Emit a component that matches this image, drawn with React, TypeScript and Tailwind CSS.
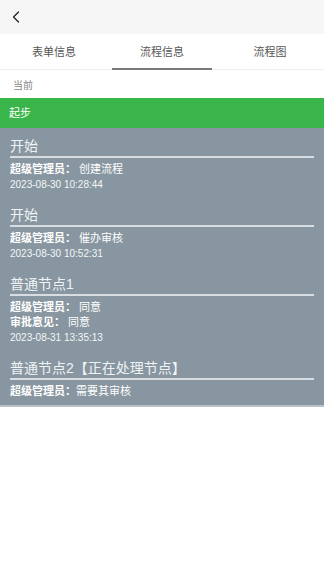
import { ChevronLeft } from "lucide-react";

const FONT = { fontFamily: '"Liberation Sans", "Noto Sans CJK SC", sans-serif' };

type Step = {
  title: string;
  rows: [string, string][];
  time?: string;
};

const steps: Step[] = [
  { title: "开始", rows: [["超级管理员：", "创建流程"]], time: "2023-08-30 10:28:44" },
  { title: "开始", rows: [["超级管理员：", "催办审核"]], time: "2023-08-30 10:52:31" },
  {
    title: "普通节点1",
    rows: [
      ["超级管理员：", "同意"],
      ["审批意见：", "同意"],
    ],
    time: "2023-08-31 13:35:13",
  },
  { title: "普通节点2【正在处理节点】", rows: [["超级管理员：", "需要其审核"]] },
];

export default function App() {
  const tabs = ["表单信息", "流程信息", "流程图"];

  return (
    <div className="w-[324px] h-[576px] bg-white overflow-hidden" style={FONT}>
      <div className="h-[34px] bg-[#f6f6f6] flex items-center pl-[6px]">
        <ChevronLeft className="w-[20px] h-[20px] text-[#222]" strokeWidth={1.5} />
      </div>

      <div className="h-[36px] flex border-b border-[#eeeeee]">
        {tabs.map((t, i) => (
          <div key={t} className="flex-1 flex flex-col items-center justify-center relative">
            <span className="text-[11px] text-[#555] pt-[2px]">{t}</span>
            {i === 1 && <div className="absolute bottom-[-1px] left-[4px] right-[4px] h-[2px] bg-[#7a7a7a]" />}
          </div>
        ))}
      </div>

      <div className="h-[28px] flex items-center px-[13px] pt-[2px] text-[10px] text-[#888]">当前</div>

      <div className="h-[30px] bg-[#39b54a] flex items-center px-[9px] text-[11px] text-white">起步</div>

      <div className="bg-[#8796a0] px-[10px] pt-[8px] pb-[6px] border-b-2 border-[#b9c2c8]">
        {steps.map((s, i) => (
          <div key={i} className="mb-[13px] last:mb-0">
            <div className="text-[14px] leading-[20px] text-[#f0f3f5] border-b-2 border-[#d7dde1]">
              {s.title}
            </div>
            <div className="pt-[4px]">
              {s.rows.map(([k, v], j) => (
                <div key={j} className="text-[11px] leading-[15px] text-white">
                  <span className="font-bold">{k}</span>
                  {i < 3 && <span className="ml-[3px]" />}
                  <span>{v}</span>
                </div>
              ))}
              {s.time && <div className="text-[10px] leading-[15px] text-[#f4f6f7]">{s.time}</div>}
            </div>
          </div>
        ))}
      </div>
    </div>
  );
}
